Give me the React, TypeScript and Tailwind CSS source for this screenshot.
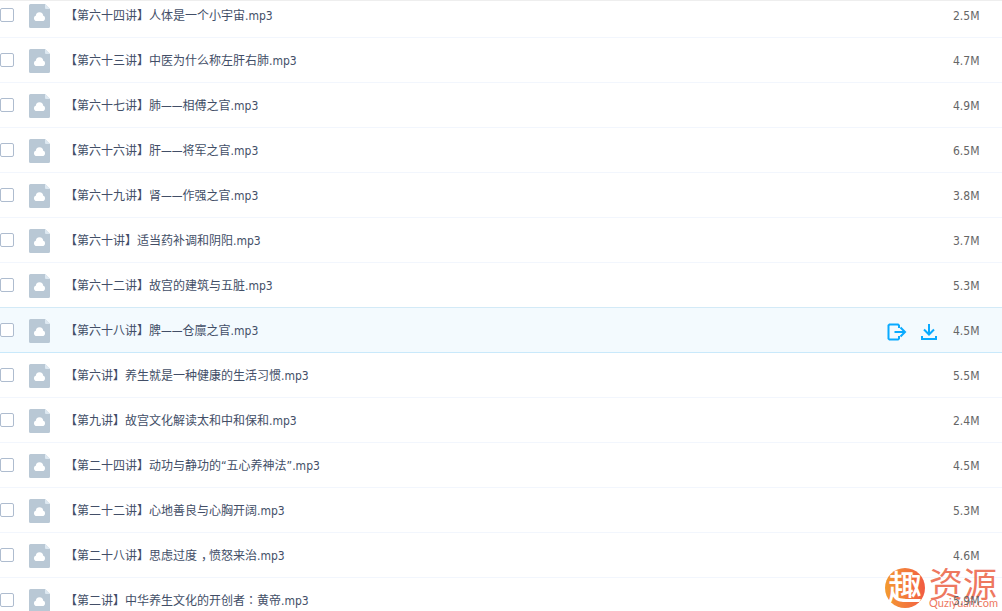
import { Fragment } from "react";
import clsx from "clsx";

type FileItem = {
  name: string;
  size: string;
  active?: boolean;
};

const FILES: FileItem[] = [
  { name: "【第六十四讲】人体是一个小宇宙.mp3", size: "2.5M" },
  { name: "【第六十三讲】中医为什么称左肝右肺.mp3", size: "4.7M" },
  { name: "【第六十七讲】肺——相傅之官.mp3", size: "4.9M" },
  { name: "【第六十六讲】肝——将军之官.mp3", size: "6.5M" },
  { name: "【第六十九讲】肾——作强之官.mp3", size: "3.8M" },
  { name: "【第六十讲】适当药补调和阴阳.mp3", size: "3.7M" },
  { name: "【第六十二讲】故宫的建筑与五脏.mp3", size: "5.3M" },
  { name: "【第六十八讲】脾——仓廪之官.mp3", size: "4.5M", active: true },
  { name: "【第六讲】养生就是一种健康的生活习惯.mp3", size: "5.5M" },
  { name: "【第九讲】故宫文化解读太和中和保和.mp3", size: "2.4M" },
  { name: "【第二十四讲】动功与静功的“五心养神法”.mp3", size: "4.5M" },
  { name: "【第二十二讲】心地善良与心胸开阔.mp3", size: "5.3M" },
  { name: "【第二十八讲】思虑过度，愤怒来治.mp3", size: "4.6M" },
  { name: "【第二讲】中华养生文化的开创者：黄帝.mp3", size: "5.9M" },
];

function FileIcon() {
  return (
    <svg width="21" height="24" viewBox="0 0 21 24" className="shrink-0" aria-hidden="true">
      <path d="M1.5 0H16l5 5v17.5a1.5 1.5 0 0 1-1.5 1.5h-18A1.5 1.5 0 0 1 0 22.5v-21A1.5 1.5 0 0 1 1.5 0z" fill="#b9c8d5" />
      <path d="M16 0l5 5h-4a1 1 0 0 1-1-1z" fill="#dde8f1" />
      <g fill="#fff">
        <circle cx="7.8" cy="14.2" r="2.8" />
        <circle cx="13.2" cy="14.2" r="2.8" />
        <circle cx="10.500" cy="11.800" r="3.600" />
        <rect x="7.800" y="13" width="5.400" height="4" />
      </g>
    </svg>
  );
}

function ShareIcon() {
  return (
    <svg width="20" height="18" viewBox="0 0 20 18" fill="none" stroke="#09aaff" strokeWidth="2" aria-hidden="true">
      <path d="M12 5V2.500L11 1.500H2.500L1.500 2.500v13l1 1H11l1-1V13" />
      <path d="M7.500 9H17.500M13.500 4.500L18 9 13.500 13.500" />
    </svg>
  );
}

function DownloadIcon() {
  return (
    <svg width="16" height="18" viewBox="0 0 16 18" fill="none" stroke="#09aaff" strokeWidth="2" aria-hidden="true">
      <path d="M8 1v10.500M3 6.500L8 11.500 13 6.500M1 13v3h14v-3" />
    </svg>
  );
}

// full-width comma and colon sit in the middle of their cell
function FileName({ name }: { name: string }) {
  return (
    <>
      {name.split(/([，：])/).map((part, i) => {
        if (part === "，") {
          return (
            <span key={i} className="inline-block w-3 indent-1">
              {part}
            </span>
          );
        }
        if (part === "：") {
          return (
            <span key={i} lang="zh-TW" className="font-['Noto_Sans_CJK_TC',sans-serif] leading-none">
              {part}
            </span>
          );
        }
        return <Fragment key={i}>{part}</Fragment>;
      })}
    </>
  );
}

function FileRow({ file }: { file: FileItem }) {
  return (
    <li
      className={clsx(
        "flex items-center border-b pr-[23px]",
        file.active
          ? "-mt-px h-[46px] border-t border-[#c9e9fb] bg-[#f3fafe] border-t-[#d3eaf7]"
          : "h-[45px] border-[#f2f6fd]"
      )}
    >
      <input
        type="checkbox"
        aria-label={file.name}
        className="size-3.5 shrink-0 appearance-none rounded-xs border border-[#aebccf] bg-white"
      />
      <div className="ml-[15px] flex min-w-0 flex-1 items-center gap-[15px] pt-0.5">
        <FileIcon />
        <a href="#" className="whitespace-nowrap text-[#424e67]">
          <FileName name={file.name} />
        </a>
      </div>
      {file.active && (
        <div className="mr-4 flex items-center gap-3.5 pt-1">
          <button type="button" aria-label="分享">
            <ShareIcon />
          </button>
          <button type="button" aria-label="下载">
            <DownloadIcon />
          </button>
        </div>
      )}
      <span className="relative z-10 w-[26px] shrink-0 pt-0.5 whitespace-nowrap text-[#666]">{file.size}</span>
    </li>
  );
}

function Watermark() {
  return (
    <div className="absolute right-1 bottom-0.5 flex items-end gap-1 text-[#ee785f]">
      <div className="mb-px flex size-10 items-center justify-center rounded-full bg-linear-to-r from-[#f39a2f] to-[#f15a42] text-[34px] leading-none font-medium text-white">
        趣
      </div>
      <div className="flex flex-col">
        <span className="text-[34px] leading-6">资源</span>
        <span className="font-['Lato',sans-serif] text-[11px] leading-3">Quziyuan.com</span>
      </div>
    </div>
  );
}

export default function App() {
  return (
    <main
      lang="zh-CN"
      className="relative h-screen overflow-hidden border-t border-[#eeeeee] bg-white font-['DejaVu_Sans_Condensed','Noto_Sans_CJK_SC',sans-serif] text-xs"
    >
      <ul className="-mt-2">
        {FILES.map((file) => (
          <FileRow key={file.name} file={file} />
        ))}
      </ul>
      <Watermark />
    </main>
  );
}
